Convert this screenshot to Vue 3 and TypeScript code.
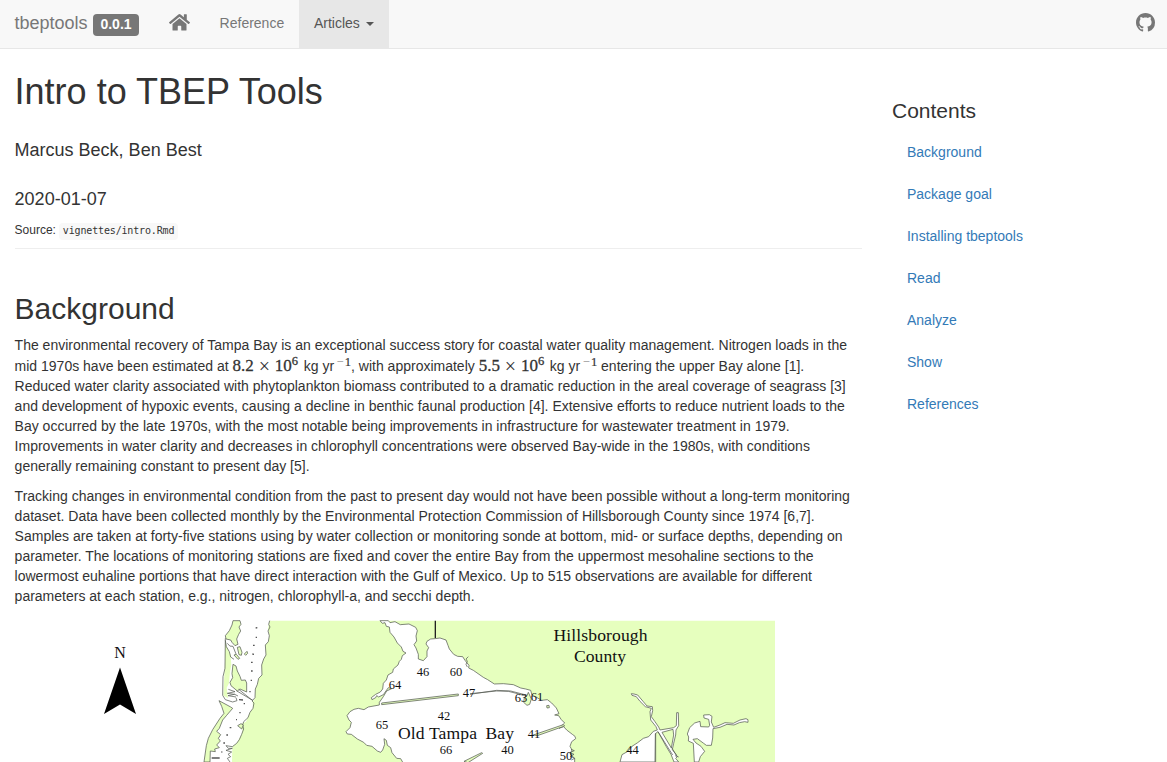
<script setup lang="ts">
interface Label { t: string; x: number; y: number }

const contents: string[] = ['Background', 'Package goal', 'Installing tbeptools', 'Read', 'Analyze', 'Show', 'References']

const stations: Label[] = [
  { t: '46', x: 423, y: 676 }, { t: '60', x: 456, y: 676 }, { t: '64', x: 395, y: 689 },
  { t: '47', x: 469, y: 697 }, { t: '63', x: 521, y: 702 }, { t: '61', x: 537, y: 701 },
  { t: '42', x: 444, y: 720 }, { t: '65', x: 382, y: 728.5 }, { t: '41', x: 534, y: 738 },
  { t: '66', x: 446, y: 754 }, { t: '40', x: 507.5, y: 754 }, { t: '50', x: 566, y: 760 },
  { t: '44', x: 632.5, y: 754 },
]

const loads: string[] = ['8.2', '5.5']
</script>

<template>
  <div class="page">
    <header class="navbar">
      <a class="brand">tbeptools</a><span class="version">0.0.1</span>
      <a class="home">
        <svg width="21" height="18.67" viewBox="0 0 576 512"><path fill="#777" d="M280.37 148.26L96 300.11V464a16 16 0 0 0 16 16l112.06-.29a16 16 0 0 0 15.92-16V368a16 16 0 0 1 16-16h64a16 16 0 0 1 16 16v95.64a16 16 0 0 0 16 16.05L464 480a16 16 0 0 0 16-16V300L295.67 148.26a12.19 12.19 0 0 0-15.3 0zM571.6 251.47L488 182.56V44.05a12 12 0 0 0-12-12h-56a12 12 0 0 0-12 12v72.61L318.47 43a48 48 0 0 0-61 0L4.34 251.47a12 12 0 0 0-1.6 16.9l25.5 31A12 12 0 0 0 45.15 301l235.22-193.74a12.19 12.19 0 0 1 15.3 0L530.9 301a12 12 0 0 0 16.9-1.6l25.5-31a12 12 0 0 0-1.7-16.93z" /></svg>
      </a>
      <a class="item">Reference</a>
      <a class="item active">Articles<i class="caret"></i></a>
      <a class="github">
        <svg width="19" height="19" viewBox="0 0 16 16"><path fill="#777" d="M8 0C3.58 0 0 3.58 0 8c0 3.54 2.29 6.53 5.47 7.59.4.07.55-.17.55-.38 0-.19-.01-.82-.01-1.49-2.01.37-2.53-.49-2.69-.94-.09-.23-.48-.94-.82-1.13-.28-.15-.68-.52-.01-.53.63-.01 1.08.58 1.23.82.72 1.21 1.87.87 2.33.66.07-.52.28-.87.51-1.07-1.78-.2-3.64-.89-3.64-3.95 0-.87.31-1.59.82-2.15-.08-.2-.36-1.02.08-2.12 0 0 .67-.21 2.2.82.64-.18 1.32-.27 2-.27s1.36.09 2 .27c1.53-1.04 2.2-.82 2.2-.82.44 1.1.16 1.92.08 2.12.51.56.82 1.27.82 2.15 0 3.07-1.87 3.75-3.65 3.95.29.25.54.73.54 1.48 0 1.07-.01 1.93-.01 2.2 0 .21.15.46.55.38A8.01 8.01 0 0 0 16 8c0-4.42-3.58-8-8-8z" /></svg>
      </a>
    </header>

    <div class="row">
      <main>
        <h1>Intro to TBEP Tools</h1>
        <h4 class="author">Marcus Beck, Ben Best</h4>
        <h4 class="date">2020-01-07</h4>
        <div class="source">Source: <code>vignettes/intro.Rmd</code></div>
        <h2>Background</h2>
        <p class="first">
          <span class="lead">The environmental recovery of Tampa Bay is an exceptional success story for coastal water quality management. Nitrogen loads in the</span>
          mid 1970s have been estimated at <span class="math"><span class="num">{{ loads[0] }}</span><span class="times">×</span><span class="ten">10</span><span class="exp">6</span></span> kg yr<span class="inv"><span class="minus">−</span>1</span>, with approximately <span class="math"><span class="num">{{ loads[1] }}</span><span class="times">×</span><span class="ten">10</span><span class="exp">6</span></span> kg yr<span class="inv"><span class="minus">−</span>1</span> entering the upper Bay alone [1].<br />
          Reduced water clarity associated with phytoplankton biomass contributed to a dramatic reduction in the areal coverage of seagrass [3]<br />
          and development of hypoxic events, causing a decline in benthic faunal production [4]. Extensive efforts to reduce nutrient loads to the<br />
          Bay occurred by the late 1970s, with the most notable being improvements in infrastructure for wastewater treatment in 1979.<br />
          Improvements in water clarity and decreases in chlorophyll concentrations were observed Bay-wide in the 1980s, with conditions<br />
          generally remaining constant to present day [5].
        </p>
        <p>
          Tracking changes in environmental condition from the past to present day would not have been possible without a long-term monitoring<br />
          dataset. Data have been collected monthly by the Environmental Protection Commission of Hillsborough County since 1974 [6,7].<br />
          Samples are taken at forty-five stations using by water collection or monitoring sonde at bottom, mid- or surface depths, depending on<br />
          parameter. The locations of monitoring stations are fixed and cover the entire Bay from the uppermost mesohaline sections to the<br />
          lowermost euhaline portions that have direct interaction with the Gulf of Mexico. Up to 515 observations are available for different<br />
          parameters at each station, e.g., nitrogen, chlorophyll-a, and secchi depth.
        </p>
        <svg class="map" width="847" height="146" viewBox="15 616 847 146">
          <!-- mainland and barrier islands -->
          <g class="coast" transform="translate(200 615) scale(.33333)">
            <path class="fill" d="M209 17L204 40 208 62 205 80 196 90 198 120 191 132 185 150 186 180 176 190 172 208 166 222 165 248 158 262 159 280 150 292 138 320 118 330 128 345 125 358 110 385 97 395 96 441H1725V17Z" />
            <path d="M209 17L206 28 210 36 204 48 208 62 205 80 196 90 198 120 191 132 185 150 186 180 176 190 172 208 166 222 165 248 156 258 162 264 159 280 150 292 144 308 131 320 128 330 131 342 125 358 118 374 110 385 97 395 78 392 85 400 97 400 78 406 95 411 84 418 92 425 82 430 90 441" />
            <path class="land" d="M99 17L96 30 88 47 76 62 78 72 92 75 96 82 105 92 114 88 110 72 116 58 122 48 117 36 123 28 120 17Z" />
            <path class="fill" d="M75 78L79 92 86 108 92 120 94 150 90 170 87 205 80 218 84 250 70 242 75 140Z" />
            <path d="M76 76L79 95 88 110 92 126 102 133M76 70L75 160 69 185 68 241 76 254 98 261 111 257 108 248" />
            <path class="land" d="M99 148L108 153 112 168 120 184 124 196 136 195 140 204 140 231 120 222 112 228 93 212 90 202 98 188 96 176Z" />
            <path class="land" d="M112 97L120 95 126 112 124 121 117 119ZM102 120L109 118 119 130 114 133ZM133 117L141 109 143 115 137 121Z" />
            <path d="M82 85Q89 97 99 94L108 117M85 223L105 230 82 235 103 238 84 242 108 246M109 227L158 256 152 252 116 223M102 237L114 243" />
            <path class="land" d="M57 257L92 276 98 280 80 301 68 315 58 340 50 349 62 359 55 370 61 378 50 390 58 398 44 402 46 410 31 408 30 441H12L19 392 25 370 38 344 60 310 72 295 65 274Z" />
            <path class="land" d="M113 332L123 326 130 330 125 342Z" />
            <path class="dots" d="M167 39l5-1M167 67h4M159 91h5M157 117l5 1M153 142h5M153 168h5M152 196h4M148 230h4M117 254l12 1M131 266h4M118 293h4M108 314h3M89 338h5M79 360h5M70 384h5M64 411h3M35 429h24" />
          </g>
          <!-- Old Tampa Bay -->
          <g class="coast" transform="translate(340 615) scale(.33333)">
            <path class="water" d="M120 17L127 25 135 23 139 34 148 36 150 52 162 66 172 84 184 96 189 109 198 114 187 122 184 133 178 139 174 150 160 162 158 172 144 180 139 195 130 205 128 222 121 231 107 238 94 248 96 254 107 248 110 242 116 246 130 239 145 218 155 221 140 228 130 245 118 262 118 270 85 276 72 284 55 280 42 283 30 290 21 302 27 315 34 322 30 338 18 350 22 357 34 358 52 372 71 382 80 391 96 394 112 408 122 412 128 405 134 388 132 371 139 376 142 391 152 398 156 413 170 430 182 431 190 445H704L704 430 690 417 696 405 690 394 695 380 707 371 705 364 697 358 680 345 671 335 657 340 674 324 664 314 656 302 644 300 657 296 649 279 635 264 622 254 605 256 588 246 576 240 572 226 557 222 542 219 520 209 490 206 463 207 443 194 430 187 400 166 386 159 387 151 375 136 368 125 353 124 341 118 328 102 324 91 318 75 300 69 285 71 272 72 261 79 258 87 266 98 261 108 261 125 250 137 235 132 235 118 228 99 222 89 230 78 228 63 232 47 227 37 207 27 181 29 165 20 150 23 145 17Z" />
            <path class="road" d="M286 17V69" />
            <path class="land" d="M125 264L355 237V242L125 269Z" />
            <path d="M390 236L470 228 505 229 545 239 562 245M390 238L470 226 512 228 562 241M385 125L378 132 382 139 378 148 382 156" />
            <path class="land" d="M553 248L560 244 565 232 570 243 574 252 569 268 561 271 551 262Z" />
            <path class="land" d="M580 360L670 329 674 333 592 362ZM620 272L627 271 628 278 621 279ZM372 439L425 413 428 415 384 443Z" />
            <path d="M693 403L703 407 690 413 702 418 691 424 704 430 694 435" />
          </g>
          <!-- rivers and Hillsborough Bay -->
          <g class="coast" transform="translate(590 615) scale(.33333)">
            <path class="water" d="M124 236L132 237 143 240 160 260 171 273 187 275 188 287 184 305 195 320 206 336 210 345 251 338 259 332 260 293H265L266 332 258 345 257 360 251 385 247 404 257 417 262 425 257 430 266 441H252L243 418 229 395 204 350 196 356 195 441H90L96 419 112 410 126 394 143 383 160 370 176 365 190 349 202 345 198 335 182 315 180 290 184 280 166 275 150 259 139 245 126 241Z" />
            <path class="land" d="M216 352L249 343 251 360 244 399Z" />
            <path d="M204 350L248 420M197 355V441M245 398L260 422M255 422L266 426" />
            <path class="water" d="M330 319L332 335 356 336 359 331 356 313 342 309 341 300 358 299 366 304 364 321 371 337 390 330 405 323 430 325 450 315 468 311 474 314 474 322 464 320 448 323 432 330 411 328 390 337 369 341 368 369 364 391 349 391 341 385 322 371 309 373 318 384 333 394 344 409 331 425 326 441H313L310 385 295 378 296 366 292 357 299 338 314 324Z" />
          </g>
          <path d="M120 667.5L136 714 120 704.5 104 714Z" />
          <g class="small"><text v-for="s in stations" :key="s.t" :x="s.x" :y="s.y">{{ s.t }}</text></g>
          <text class="north" x="120" y="657.5">N</text>
          <g class="place">
            <text x="553.5" y="641" textLength="94">Hillsborough</text>
            <text x="574" y="661.5" textLength="52">County</text>
            <text x="398" y="739" textLength="79">Old Tampa</text>
            <text x="485.5" y="739" textLength="28.5">Bay</text>
          </g>
        </svg>
      </main>
      <aside>
        <h3>Contents</h3>
        <a v-for="c in contents" :key="c">{{ c }}</a>
      </aside>
    </div>
  </div>
</template>

<style>
body { margin: 0; overflow: hidden; }
</style>

<style scoped>
.page { height: 762px; overflow: hidden; background: #fff; color: #333; font: 14px/20px "Liberation Sans", Arial, sans-serif; }
.navbar { box-sizing: border-box; height: 49px; display: flex; align-items: stretch; background: #f8f8f8; border-bottom: 1px solid #e7e7e7; color: #777; }
.brand { font-size: 18px; line-height: 46px; padding-left: 14.5px; width: 93px; box-sizing: border-box; white-space: nowrap; }
.version { box-sizing: border-box; width: 46px; height: 22px; margin-top: 14px; border-radius: 4px; background: #777; color: #fff; font: bold 14px/21px "Liberation Sans", Arial, sans-serif; text-align: center; }
.home { width: 35.6px; padding-left: 30px; padding-top: 12.5px; }
.item { line-height: 46px; padding: 0 14.7px 0 15px; }
.active { background: #e7e7e7; color: #555; width: 60px; white-space: nowrap; }
.caret { display: inline-block; border: 4px solid transparent; border-top-color: #555; border-bottom: 0; margin-left: 6px; vertical-align: 2.5px; }
.github { margin-left: auto; padding: 12.5px 12px 0 0; }
.row { display: flex; }
main { width: 847.4px; padding: 0 15px 0 14.6px; }
h1, h2, h3, h4, p { margin: 0; font-weight: 400; }
h1 { font-size: 36px; line-height: 40px; margin-top: 23px; }
h4 { font-size: 18px; line-height: 20px; }
.author { margin-top: 28px; }
.date { margin-top: 29px; }
.source { font-size: 12px; height: 28px; margin-top: 11px; border-bottom: 1px solid #eee; }
code { display: inline-block; height: 17px; padding: 0 4px; margin-left: -.5px; border-radius: 4px; background: #f8f8f8; font: 10px/16px "DejaVu Sans Mono", monospace; letter-spacing: -.15px; }
h2 { font-size: 30px; line-height: 33px; margin-top: 43px; }
p { margin-top: 10px; white-space: nowrap; }
.first { height: 141px; }
.lead { display: block; height: 21px; }
.math, .inv { display: inline-block; height: 20px; vertical-align: top; font-family: "Liberation Serif", serif; }
.math { font-size: 17px; width: 67.3px; line-height: 20px; -webkit-text-stroke: .3px #333; }
.times { display: inline-block; width: 21px; height: 20px; vertical-align: top; font-size: 20px; text-align: center; -webkit-text-stroke: 0; }
.exp { position: relative; top: -6px; font-size: 12.5px; }
.inv { width: 17px; font-size: 12.5px; line-height: 12px; text-align: right; -webkit-text-stroke: .2px #333; }
.minus { display: inline-block; width: 9.5px; text-align: center; color: #888; -webkit-text-stroke: 0; }
.map { display: block; margin: 10px 0 0 .4px; }
.fill { fill: #e6ffbe; stroke: none !important; }
.land { fill: #e6ffbe; }
.water { fill: #fff; }
.coast path { stroke: #555a52; stroke-width: 2.2; stroke-linejoin: round; }
.coast path:not([class]) { fill: none; }
.coast .dots { stroke: #555; stroke-width: 4; }
.coast .road { stroke: #222; stroke-width: 4; }
text { fill: #111; font-family: "Liberation Serif", "Times New Roman", serif; }
.small text { font-size: 12.5px; text-anchor: middle; }
.north { font-size: 16px; text-anchor: middle; }
.place text { font-size: 17.6px; }
aside { padding: 50px 0 0 15px; display: flex; flex-direction: column; }
h3 { font-size: 21px; line-height: 23px; margin-bottom: 20px; }
aside a { margin: 0 0 22px 15px; color: #337ab7; }
</style>
